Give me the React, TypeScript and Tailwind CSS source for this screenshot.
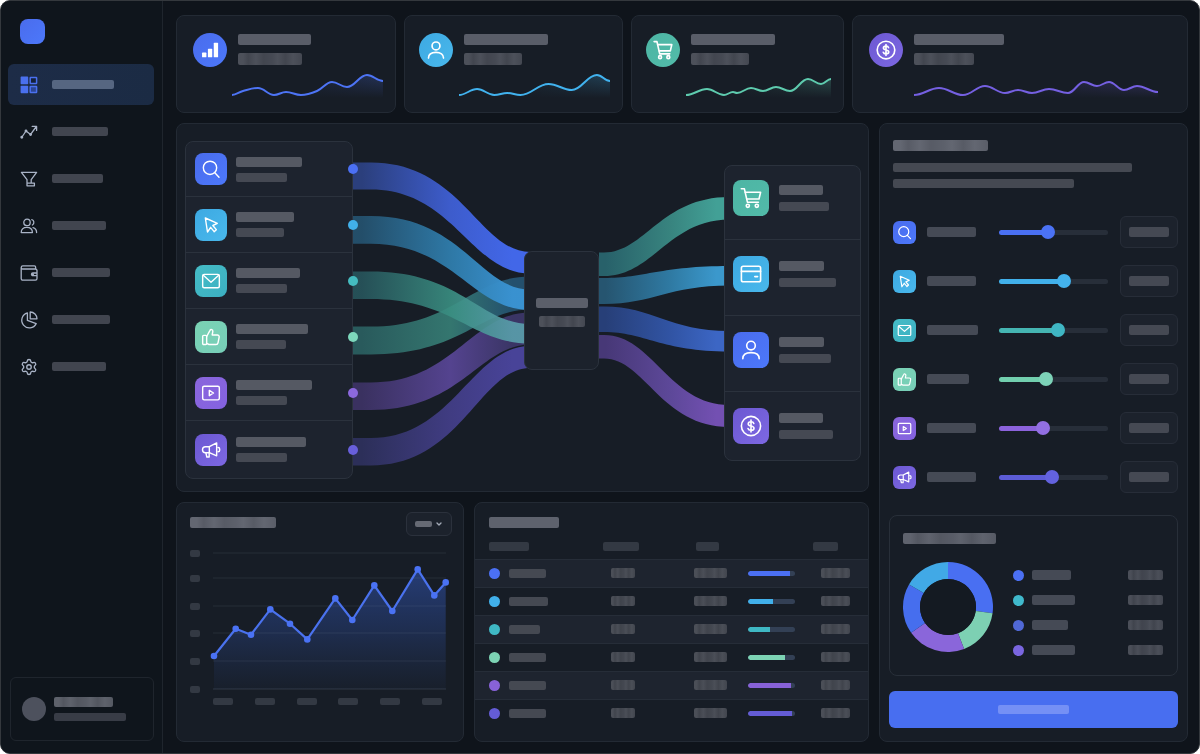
import React, { useState } from "react";
import { ChevronDown, Settings } from "lucide-react";

type IconName =
  | "search" | "pointer" | "mail" | "like" | "video" | "megaphone"
  | "cart" | "card" | "user" | "dollar" | "bars";

const glyphs: Record<IconName, React.ReactNode> = {
  search: (
    <>
      <circle cx="10.8" cy="10.6" r="8" />
      <path d="M16.6 16.6 21.6 21.8" />
    </>
  ),
  pointer: <path d="M5.2 3.6 19.6 10 14.2 12.6 18.4 17.6 15.8 20 11.6 14.8 7.8 20.4Z" />,
  mail: (
    <>
      <rect x="2" y="4" width="20" height="16" rx="1.8" />
      <path d="M2.8 5.2 12 13.4 21.2 5.2" />
    </>
  ),
  like: (
    <>
      <rect x="2" y="10" width="4.8" height="11" rx="1.2" />
      <path d="M6.8 11.4 10.8 4c.8-1.6 3.6-1 3.4 1.2L13.4 9.6h6.2a2.2 2.2 0 0 1 2.2 2.6l-1.4 6.8a2.4 2.4 0 0 1-2.4 2H9.6l-2.8-1.4" />
    </>
  ),
  video: (
    <>
      <rect x="2" y="3.8" width="20" height="16.4" rx="1.8" />
      <path d="M10 8.8 15 12 10 15.2Z" />
    </>
  ),
  megaphone: (
    <>
      <path d="M10 8H5.4a3.6 3.6 0 0 0 0 7.2H10l8.8 3.8V3.4L10 8v7.2" />
      <path d="M5.8 15.2 7 20.4h2.8v-5.2M20.4 9h.2a1.8 1.8 0 0 1 1.8 1.8v1.4a1.8 1.8 0 0 1-1.8 1.8h-.2" />
    </>
  ),
  cart: (
    <>
      <path d="M2.3 2.8H5.4L8.4 16.2H19.4" />
      <path d="M6.2 6.2H21.6L20 13H7.8" />
      <circle cx="8.8" cy="19.8" r="1.6" />
      <circle cx="17.8" cy="19.8" r="1.6" />
    </>
  ),
  card: (
    <>
      <rect x="2.4" y="4.2" width="19.2" height="15.6" rx="1.8" />
      <path d="M2.4 9.4H21.6M15.8 14.6h2.8" />
    </>
  ),
  user: (
    <>
      <circle cx="12" cy="7.6" r="4.3" />
      <path d="M3.8 20.8C3.8 16.8 7 14.6 12 14.6s8.2 2.2 8.2 6.2" />
    </>
  ),
  dollar: (
    <>
      <circle cx="12" cy="12" r="9.6" />
      <path d="M14.8 9.4c-.3-1-1.3-1.6-2.8-1.6-1.6 0-2.8.8-2.8 2.1 0 3 5.8 1.3 5.8 4.3 0 1.3-1.3 2.1-3 2.1s-2.7-.7-3-1.8M12 6v12" />
    </>
  ),
  bars: (
    <g fill="currentColor" stroke="none">
      <rect x="1.4" y="15.4" width="5.8" height="6.4" rx="0.8" />
      <rect x="9.2" y="10.4" width="5.8" height="11.4" rx="0.8" />
      <rect x="17" y="2.4" width="5.8" height="19.4" rx="0.8" />
    </g>
  ),
};

function Icon({ name, className, weight = 1.8 }: { name: IconName; className: string; weight?: number }) {
  return (
    <svg viewBox="0 0 24 24" className={className} fill="none" stroke="currentColor" strokeWidth={weight} strokeLinecap="round" strokeLinejoin="round" aria-hidden="true">
      {glyphs[name]}
    </svg>
  );
}

/** Placeholder for a line of text; size and colour come from the class. */
function Bar({ className }: { className: string }) {
  return <span className={`block rounded-xs ${className}`} />;
}

const mottle =
  "bg-[linear-gradient(90deg,#ffffff08_0_8%,#00000012_16%,#ffffff08_28%,#00000012_40%,#00000004_54%,#ffffff08_62%,#00000012_74%,#ffffff08_86%,#0000000c_100%)]";

const chartTint = {
  blue: "bg-linear-to-br from-[#4a6cec] to-[#4c78fb]",
  sky: "bg-linear-to-br from-[#3da9e2] to-[#49b8ec]",
  teal: "bg-linear-to-br from-[#45bcc6] to-[#3cb0c2]",
  mint: "bg-linear-to-br from-[#7ad2b4] to-[#77ceb8]",
  purple: "bg-linear-to-br from-[#8a66dc] to-[#8462e0]",
  violet: "bg-linear-to-br from-[#6c58d2] to-[#7d68e2]",
  green: "bg-linear-to-br from-[#4db5a4] to-[#52bba9]",
};

/* ---------- Sidebar ---------- */

function GridIcon() {
  return (
    <svg viewBox="0 0 18 18" className="size-[18px]" aria-hidden="true">
      <rect x="0.6" y="0.6" width="7.6" height="7.6" rx="0.8" fill="#4a70ee" />
      <rect x="0.6" y="9.8" width="7.6" height="7.4" rx="0.8" fill="#4a70ee" />
      <rect x="10.2" y="1.4" width="6.4" height="6" rx="0.5" fill="#15213a" stroke="#4a70ee" strokeWidth="1.5" />
      <rect x="10.2" y="10.6" width="6.4" height="6" rx="0.5" fill="#2c4694" stroke="#4a70ee" strokeWidth="1.5" />
    </svg>
  );
}

function NavGlyph({ children }: { children: React.ReactNode }) {
  return (
    <svg viewBox="0 0 18 18" className="size-[18px]" fill="none" stroke="currentColor" strokeWidth="1.3" strokeLinecap="round" strokeLinejoin="round" aria-hidden="true">
      {children}
    </svg>
  );
}

function TrendIcon() {
  return (
    <NavGlyph>
      <path d="M2 14 6 8l4.600 3.400L16 4M12.200 3.400h4.400v4" />
      <circle cx="1.800" cy="14.200" r="0.800" fill="currentColor" />
      <circle cx="6" cy="8" r="0.800" fill="currentColor" />
      <circle cx="10.600" cy="11.600" r="0.800" fill="currentColor" />
    </NavGlyph>
  );
}

function FunnelIcon() {
  return (
    <NavGlyph>
      <path d="M1.400 2.400h15.200L11.200 9.600v3.600h3.200v2.600H7V9.600ZM7 13.200h4.200" />
    </NavGlyph>
  );
}

function UsersIcon() {
  return (
    <NavGlyph>
      <circle cx="7" cy="5.400" r="3.200" />
      <path d="M1.200 15.600c0-3.600 2.200-5.200 5.600-5.200s5.600 1.600 5.600 5.200ZM11.800 2.600c2.200.4 3 3.800.6 5.400M13 10.600c2.200.6 3.600 2 3.600 5" />
    </NavGlyph>
  );
}

function WalletIcon() {
  return (
    <NavGlyph>
      <path d="M1.200 3.600v11a1.600 1.600 0 0 0 1.600 1.600h12.600a1.600 1.600 0 0 0 1.600-1.600V6.600a1.600 1.600 0 0 0-1.600-1.600H2.400C.8 5 .8 1.800 2.800 1.800h11.600a1.200 1.200 0 0 1 1.200 1.200V5M17 9h-4.200a1.300 1.300 0 0 0 0 2.600H17" />
      <circle cx="12.900" cy="10.300" r="0.500" fill="currentColor" />
    </NavGlyph>
  );
}

function PieIcon() {
  return (
    <NavGlyph>
      <path d="M7.400 1.900a7.600 7.600 0 1 0 8.800 10.700L7.400 9.400Z" />
      <path d="M10.200 1v6.800H17A6.800 6.800 0 0 0 10.200 1Z" />
    </NavGlyph>
  );
}

const navItems = [
  { id: "Overview", icon: <GridIcon />, bar: "w-[62px]" },
  { id: "Trends", icon: <TrendIcon />, bar: "w-14" },
  { id: "Funnels", icon: <FunnelIcon />, bar: "w-[51px]" },
  { id: "Audience", icon: <UsersIcon />, bar: "w-[54px]" },
  { id: "Revenue", icon: <WalletIcon />, bar: "w-[58px]" },
  { id: "Reports", icon: <PieIcon />, bar: "w-[58px]" },
  { id: "Settings", icon: <Settings size={18} strokeWidth={1.8} />, bar: "w-[54px]" },
];

function Sidebar() {
  return (
    <aside className="flex w-[162px] shrink-0 flex-col border-r border-[#1f252d] bg-[#0f151c] pr-2 pb-3 pl-[7px]">
      <div className={`mt-[18px] ml-3 size-[25px] rounded-lg ${chartTint.blue}`} />
      <nav className="mt-5 flex flex-col gap-1.5">
        {navItems.map((item, i) => (
          <a
            key={item.id}
            href={`#${item.id.toLowerCase()}`}
            aria-label={item.id}
            aria-current={i === 0 ? "page" : undefined}
            className={`flex h-[41px] items-center gap-3.5 rounded-md pl-3 text-[#a9b3c6] ${i === 0 ? "bg-linear-to-r from-[#1d2c47] to-[#1b2b44]" : ""}`}
          >
            {item.icon}
            <Bar className={`h-[9px] ${item.bar} ${i === 0 ? "bg-[#566681]" : "bg-[#41454f]"}`} />
          </a>
        ))}
      </nav>
      <div className="mt-auto ml-0.5 flex h-16 items-center gap-2 rounded-md border border-[#1f252d] pl-[11px]">
        <span className="size-6 rounded-full bg-[#4d515d]" />
        <div className="flex flex-col gap-1.5">
          <Bar className={`h-[10px] w-[59px] bg-[#595d67] ${mottle}`} />
          <Bar className="h-2 w-[72px] bg-[#383c46]" />
        </div>
      </div>
    </aside>
  );
}

/* ---------- Stat cards ---------- */

type Point = [number, number];

function smoothPath(points: Point[]) {
  const slope = (i: number) => {
    if (i === 0 || i === points.length - 1) return 0;
    const [before, , after] = [points[i - 1], points[i], points[i + 1]];
    const turning = (points[i][1] - before[1]) * (after[1] - points[i][1]) <= 0;
    return turning ? 0 : (after[1] - before[1]) / (after[0] - before[0]);
  };
  let d = `M${points[0][0]} ${points[0][1]}`;
  for (let i = 0; i < points.length - 1; i++) {
    const [x1, y1] = points[i];
    const [x2, y2] = points[i + 1];
    const reach = (x2 - x1) * 0.4;
    d += `C${x1 + reach} ${y1 + slope(i) * reach} ${x2 - reach} ${y2 - slope(i + 1) * reach} ${x2} ${y2}`;
  }
  return d;
}

interface Stat {
  icon: IconName;
  tint: string;
  color: string;
  pad: string;
  indent: string;
  title: string;
  value: string;
  glyph: string;
  points: Point[];
}

const stats: Stat[] = [
  {
    icon: "bars", tint: chartTint.blue, color: "#4d74f5", pad: "pr-3 pl-4", indent: "ml-[39px]", title: "w-[73px]", value: "w-16", glyph: "size-[18px]",
    points: [[0, 25], [11, 21], [26, 18], [42, 25], [54, 22], [69, 25], [85, 21], [100, 12], [115, 17], [135, 5], [151, 11]],
  },
  {
    icon: "user", tint: chartTint.sky, color: "#41b2ee", pad: "pr-3 pl-3.5", indent: "ml-10", title: "w-[84px]", value: "w-[58px]", glyph: "size-[22px]",
    points: [[0, 25], [18, 19], [35, 25], [48, 23], [61, 25], [89, 14], [112, 20], [137, 5], [150, 11]],
  },
  {
    icon: "cart", tint: chartTint.green, color: "#5ecbae", pad: "pr-3 pl-3.5", indent: "ml-10", title: "w-[84px]", value: "w-[58px]", glyph: "size-[22px]",
    points: [[0, 25], [21, 19], [38, 25], [47, 22], [51, 23], [65, 18], [77, 21], [90, 17], [104, 21], [122, 9], [135, 14], [145, 9]],
  },
  {
    icon: "dollar", tint: chartTint.violet, color: "#7560e2", pad: "pr-[29px] pl-4", indent: "ml-[45px]", title: "w-[90px]", value: "w-[60px]", glyph: "size-[22px]",
    points: [[0, 25], [25, 18], [49, 25], [71, 16], [91, 23], [104, 20], [118, 23], [135, 19], [154, 23], [170, 12], [183, 16], [195, 12], [210, 20], [223, 16], [244, 22]],
  },
];

function StatCard({ stat }: { stat: Stat }) {
  const width = stat.points[stat.points.length - 1][0];
  const line = smoothPath(stat.points);
  const id = `spark-${stat.icon}`;
  return (
    <section className={`rounded-lg border border-[#232a34] bg-[#171d26] pt-[17px] pb-3.5 ${stat.pad}`}>
      <div className="flex gap-[11px]">
        <span className={`flex size-[34px] items-center justify-center rounded-full text-white ${stat.tint}`}>
          <Icon name={stat.icon} className={stat.glyph} />
        </span>
        <div className="flex flex-col gap-2 pt-px">
          <Bar className={`h-[11px] bg-[#595d68] ${stat.title}`} />
          <Bar className={`h-3 bg-[#474b55] ${mottle} ${stat.value}`} />
        </div>
      </div>
      <div className={`mt-[3px] ${stat.indent}`}>
        <svg viewBox={`0 0 ${width} 28`} preserveAspectRatio="none" className="h-7 w-full overflow-visible" aria-hidden="true">
          <defs>
            <linearGradient id={id} x1="0" y1="0" x2="1" y2="0">
              <stop offset="0.3" stopColor={stat.color} stopOpacity="0" />
              <stop offset="1" stopColor={stat.color} stopOpacity="0.24" />
            </linearGradient>
            <linearGradient id={`${id}-fade`} x1="0" y1="0" x2="0" y2="1">
              <stop offset="0" stopColor="#171d26" stopOpacity="0" />
              <stop offset="1" stopColor="#171d26" />
            </linearGradient>
          </defs>
          <path d={`${line}V28H0Z`} fill={`url(#${id})`} />
          <path d={`${line}V28H0Z`} fill={`url(#${id}-fade)`} />
          <path d={line} fill="none" stroke={stat.color} strokeWidth="2" />
        </svg>
      </div>
    </section>
  );
}

/* ---------- Flow diagram ---------- */

const sources: { icon: IconName; tint: string; dot: string; a: string; b: string }[] = [
  { icon: "search", tint: chartTint.blue, dot: "bg-[#4b70f4]", a: "w-[66px]", b: "w-[51px]" },
  { icon: "pointer", tint: chartTint.sky, dot: "bg-[#41b0ea]", a: "w-[58px]", b: "w-12" },
  { icon: "mail", tint: chartTint.teal, dot: "bg-[#45bcc0]", a: "w-16", b: "w-[51px]" },
  { icon: "like", tint: chartTint.mint, dot: "bg-[#7dd8bc]", a: "w-[72px]", b: "w-[50px]" },
  { icon: "video", tint: chartTint.purple, dot: "bg-[#8c68de]", a: "w-[76px]", b: "w-[51px]" },
  { icon: "megaphone", tint: chartTint.violet, dot: "bg-[#685fdc]", a: "w-[70px]", b: "w-[51px]" },
];

const targets: { icon: IconName; tint: string; a: string; b: string }[] = [
  { icon: "cart", tint: chartTint.green, a: "w-11", b: "w-[50px]" },
  { icon: "card", tint: chartTint.sky, a: "w-[45px]", b: "w-[57px]" },
  { icon: "user", tint: chartTint.blue, a: "w-[45px]", b: "w-[52px]" },
  { icon: "dollar", tint: chartTint.violet, a: "w-11", b: "w-[54px]" },
];

interface Ribbon {
  from: [number, number];
  to: [number, number];
  colors: [string, string, string];
  opacity?: number;
}

const inbound: Ribbon[] = [
  { from: [185.5, 213.5], to: [135.5, 168.5], colors: ["#295a5c", "#34766f", "#24506d"] },
  { from: [241.5, 269], to: [171.5, 203.5], colors: ["#3a3160", "#54438f", "#3a3565"] },
  { from: [297, 324.5], to: [205, 227], colors: ["#2c2f59", "#403c82", "#484398"] },
  { from: [75, 102.7], to: [148.5, 169], colors: ["#24506c", "#2f7cab", "#3a94d4"], opacity: 0.96 },
  { from: [21.5, 48.5], to: [111, 132.7], colors: ["#2b3f7c", "#3d5ccc", "#4267e8"] },
  { from: [130.5, 158], to: [183, 202.5], colors: ["#27555c", "#3a8f82", "#5a9fac"], opacity: 0.9 },
];

const outbound: Ribbon[] = [
  { from: [111.5, 135], to: [56, 78.5], colors: ["#28616a", "#38847f", "#42a096"] },
  { from: [137, 163], to: [125, 144.5], colors: ["#265570", "#2f7aa3", "#3b98cc"] },
  { from: [165.5, 191], to: [190, 210.5], colors: ["#273f78", "#3154a4", "#3c66c4"] },
  { from: [194, 217.5], to: [264, 286], colors: ["#473877", "#5d4899", "#7350b2"] },
];

/** Each ribbon runs flat for a stretch, then bends towards its end through the two bend positions. */
function Ribbons({ id, ribbons, width, flat, bend }: { id: string; ribbons: Ribbon[]; width: number; flat: number; bend: [number, number] }) {
  const end = width + 6;
  return (
    <svg viewBox={`0 0 ${width} 338`} preserveAspectRatio="none" className="h-[338px] w-full overflow-visible" aria-hidden="true">
      {ribbons.map((r, i) => {
        const lean = r.to[0] > r.from[0] ? 4 : -4;
        return (
          <g key={i}>
            <linearGradient id={`${id}-${i}`}>
              <stop offset="0.05" stopColor={r.colors[0]} />
              <stop offset="0.55" stopColor={r.colors[1]} />
              <stop offset="0.9" stopColor={r.colors[2]} />
            </linearGradient>
            <path
              fill={`url(#${id}-${i})`}
              fillOpacity={r.opacity ?? 1}
              d={`M0 ${r.from[0]}H${flat}C${bend[0] + lean} ${r.from[0]} ${bend[1] + lean} ${r.to[0]} ${end} ${r.to[0]}V${r.to[1]}C${bend[1] - lean} ${r.to[1]} ${bend[0] - lean} ${r.from[1]} ${flat} ${r.from[1]}H0Z`}
            />
          </g>
        );
      })}
    </svg>
  );
}

function FlowPanel() {
  return (
    <section className="flex items-center rounded-lg border border-[#232a34] bg-[#171d26] pt-[17px] pr-[7px] pb-3 pl-2">
      <ul className="relative z-10 w-[168px] shrink-0 rounded-lg border border-[#2b323d] bg-[#1d232e]">
        {sources.map((s) => (
          <li key={s.icon} className="relative flex h-14 items-center gap-[9px] border-b border-[#2b323d] pl-[9px] first:h-[55px] last:h-[57px] last:border-b-0">
            <span className={`flex size-8 items-center justify-center rounded-lg text-white ${s.tint}`}>
              <Icon name={s.icon} className="size-5" weight={1.7} />
            </span>
            <div className="flex flex-col gap-1.5">
              <Bar className={`h-[10px] bg-[#555963] ${s.a}`} />
              <Bar className={`h-[9px] bg-[#454953] ${s.b}`} />
            </div>
            <span className={`absolute top-1/2 -right-1.5 size-[10px] -translate-y-1/2 rounded-full ${s.dot}`} />
          </li>
        ))}
      </ul>
      <div className="min-w-0 flex-[172]">
        <Ribbons id="in" ribbons={inbound} width={172} flat={18} bend={[105, 123]} />
      </div>
      <div className="relative z-10 flex h-[119px] w-[75px] shrink-0 flex-col items-center justify-center gap-2 rounded-lg border border-[#2b323d] bg-[#1c222c] pt-1">
        <Bar className="h-[10px] w-[52px] bg-[#5b5f6a]" />
        <Bar className={`h-[11px] w-[46px] bg-[#474b55] ${mottle}`} />
      </div>
      <div className="min-w-0 flex-[125]">
        <Ribbons id="out" ribbons={outbound} width={125} flat={5} bend={[50, 66]} />
      </div>
      <ul className="relative z-10 mt-1.5 w-[137px] shrink-0 rounded-lg border border-[#2b323d] bg-[#1d232e]">
        {targets.map((t) => (
          <li key={t.icon} className="flex items-center gap-[10px] border-b border-[#2b323d] pt-4 pb-[23px] pl-2 first:pt-3.5 last:border-b-0 last:pb-4">
            <span className={`flex size-9 items-center justify-center rounded-lg text-white ${t.tint}`}>
              <Icon name={t.icon} className="size-6" weight={1.6} />
            </span>
            <div className="flex flex-col gap-[7px]">
              <Bar className={`h-[10px] bg-[#555963] ${t.a}`} />
              <Bar className={`h-[9px] bg-[#454953] ${t.b}`} />
            </div>
          </li>
        ))}
      </ul>
    </section>
  );
}

/* ---------- Line chart ---------- */

const series: Point[] = [
  [1, 103], [22.7, 75.7], [38, 81.7], [57.3, 56.4], [77, 70.7], [94.3, 86.4], [122.3, 45.4],
  [139.3, 67], [161.3, 32.4], [179.3, 58], [204.7, 16.4], [221.3, 42.4], [232.7, 29.4],
];

function ChartPanel() {
  const line = series.map((p) => p.join(",")).join(" ");
  return (
    <section className="flex flex-col rounded-lg border border-[#232a34] bg-[#171d26] px-[13px] pt-[9px]">
      <div className="flex items-start justify-between">
        <Bar className={`mt-[5px] h-[11px] w-[86px] bg-[#5e626d] ${mottle}`} />
        <div className="relative -mr-0.5">
          <select aria-label="Period" className="block h-6 w-[46px] appearance-none rounded-md border border-[#2b313c] bg-[#1c222c]">
            <option value="week" aria-label="Week" />
            <option value="month" aria-label="Month" />
          </select>
          <span className="pointer-events-none absolute inset-0 flex items-center justify-center gap-[3px]">
            <Bar className="h-1.5 w-[17px] bg-[#666a74]" />
            <ChevronDown size={8} strokeWidth={4} color="#a2a9b6" />
          </span>
        </div>
      </div>
      <div className="mt-3.5 flex gap-[13px]">
        <div className="grid w-[10px] grid-rows-[25px_28px_27px_28px_28px_7px]">
          {[0, 1, 2, 3, 4, 5].map((n) => (
            <Bar key={n} className="h-[7px] w-[10px] bg-[#333943]" />
          ))}
        </div>
        <div className="min-w-0 flex-1 pt-[3px] pr-1">
          <svg viewBox="0 0 233 136" className="w-full overflow-visible" aria-hidden="true">
            <defs>
              <linearGradient id="area" x1="0" y1="0" x2="0" y2="1">
                <stop offset="0" stopColor="#3358bc" stopOpacity="0.54" />
                <stop offset="0.5" stopColor="#2c4c9c" stopOpacity="0.36" />
                <stop offset="1" stopColor="#2b4684" stopOpacity="0.06" />
              </linearGradient>
            </defs>
            <polygon points={`1,136 ${line} 232.7,136`} fill="url(#area)" />
            {[0, 25, 53, 80, 108, 136].map((y) => (
              <path key={y} d={`M0 ${y}H233`} stroke="#8d9bb5" strokeOpacity={y === 136 ? 0.22 : 0.13} />
            ))}
            <polyline points={line} fill="none" stroke="#4a72ee" strokeWidth="2.2" strokeLinejoin="round" />
            {series.map(([x, y]) => (
              <circle key={x} cx={x} cy={y} r="3.3" fill="#4a72f4" />
            ))}
          </svg>
          <div className="mt-[9px] flex justify-between pr-1">
            {[0, 1, 2, 3, 4, 5].map((n) => (
              <Bar key={n} className="h-[7px] w-5 bg-[#333943]" />
            ))}
          </div>
        </div>
      </div>
    </section>
  );
}

/* ---------- Table ---------- */

const rows = [
  { dot: "bg-[#4b70f4]", label: "w-[37px]", share: 89 },
  { dot: "bg-[#41b0ea]", label: "w-[39px]", share: 52 },
  { dot: "bg-[#3fb8c4]", label: "w-[31px]", share: 47 },
  { dot: "bg-[#7dd3b4]", label: "w-[37px]", share: 78 },
  { dot: "bg-[#8862d8]", label: "w-[37px]", share: 92 },
  { dot: "bg-[#645cd6]", label: "w-[37px]", share: 93 },
];

function TablePanel() {
  return (
    <section className="rounded-lg border border-[#232a34] bg-[#171d26] pt-3.5 pb-3.5">
      <Bar className="ml-3.5 h-[11px] w-[70px] bg-[#5e626d]" />
      <table className="mt-1.5 w-full table-fixed border-collapse" aria-label="Channels">
        <thead>
          <tr className="h-[25px]">
            <th scope="col" aria-label="Channel" className="w-[32.5%] p-0 pl-3.5"><Bar className="h-[9px] w-10 bg-[#333943]" /></th>
            <th scope="col" aria-label="Visits" className="w-[22.2%] p-0"><Bar className="h-[9px] w-9 bg-[#333943]" /></th>
            <th scope="col" aria-label="Rate" className="w-[14.8%] p-0 pl-1.5"><Bar className="h-[9px] w-[23px] bg-[#333943]" /></th>
            <th scope="col" aria-label="Share" className="w-[16.5%] p-0" />
            <th scope="col" aria-label="Total" className="p-0"><Bar className="h-[9px] w-[25px] bg-[#333943]" /></th>
          </tr>
        </thead>
        <tbody>
          {rows.map((r) => (
            <tr key={r.dot} className="h-7 border-t border-[#262d38] odd:bg-[#1e242f]">
              <td className="p-0 pl-3.5">
                <span className="flex items-center gap-[9px]">
                  <span className={`size-[11px] rounded-full ${r.dot}`} />
                  <Bar className={`h-[9px] bg-[#454952] ${r.label}`} />
                </span>
              </td>
              <td className="p-0 pl-2"><Bar className={`h-[10px] w-6 bg-[#454952] ${mottle}`} /></td>
              <td className="p-0 pl-1"><Bar className={`h-[10px] w-[33px] bg-[#454952] ${mottle}`} /></td>
              <td className="p-0">
                <span className="block h-[5px] w-[47px] overflow-hidden rounded-full bg-[#334055]">
                  <span className={`block h-full rounded-l-full ${r.dot}`} style={{ width: `${r.share}%` }} />
                </span>
              </td>
              <td className="p-0 pl-2"><Bar className={`h-[10px] w-[29px] bg-[#454952] ${mottle}`} /></td>
            </tr>
          ))}
        </tbody>
      </table>
    </section>
  );
}

/* ---------- Right panel ---------- */

const controls: { icon: IconName; tint: string; label: string; value: number; color: string; thumb: string }[] = [
  { icon: "search", tint: chartTint.blue, label: "w-[49px]", value: 44, color: "#4a70f2", thumb: "[&::-webkit-slider-thumb]:bg-[#4b72f4]" },
  { icon: "pointer", tint: chartTint.sky, label: "w-[49px]", value: 61, color: "#41b0ea", thumb: "[&::-webkit-slider-thumb]:bg-[#43b2ec]" },
  { icon: "mail", tint: chartTint.teal, label: "w-[51px]", value: 55, color: "#45b5b2", thumb: "[&::-webkit-slider-thumb]:bg-[#3fb6c3]" },
  { icon: "like", tint: chartTint.mint, label: "w-[42px]", value: 42, color: "#72cfae", thumb: "[&::-webkit-slider-thumb]:bg-[#7dd3b8]" },
  { icon: "video", tint: chartTint.purple, label: "w-[49px]", value: 39, color: "#8c63dc", thumb: "[&::-webkit-slider-thumb]:bg-[#926fe2]" },
  { icon: "megaphone", tint: chartTint.violet, label: "w-[49px]", value: 48, color: "#5c5cd6", thumb: "[&::-webkit-slider-thumb]:bg-[#6362de]" },
];

function ControlRow({ control }: { control: (typeof controls)[number] }) {
  const [value, setValue] = useState(control.value);
  const id = `weight-${control.icon}`;
  return (
    <div className="grid h-8 grid-cols-[24px_62px_1fr_58px] items-center">
      <span className={`flex size-[23px] items-center justify-center rounded-md text-white ${control.tint}`}>
        <Icon name={control.icon} className="size-[15px]" weight={1.9} />
      </span>
      <label htmlFor={id} aria-label={control.icon} className="pl-[10px]">
        <Bar className={`h-[10px] bg-[#454a55] ${control.label}`} />
      </label>
      <div className="flex items-center pr-3 pl-5">
        <input
          id={id}
          type="range"
          value={value}
          onChange={(e) => setValue(Number(e.target.value))}
          style={{ background: `linear-gradient(90deg, ${control.color} ${value}%, #272e39 ${value}%)` }}
          className={`h-[5px] w-full min-w-0 appearance-none rounded-full [&::-webkit-slider-thumb]:size-3.5 [&::-webkit-slider-thumb]:appearance-none [&::-webkit-slider-thumb]:rounded-full ${control.thumb}`}
        />
      </div>
      <output htmlFor={id} className="flex h-8 items-center justify-center rounded-md border border-[#272d38] bg-[#1c222c]">
        <Bar className="h-[10px] w-10 bg-[#454953]" />
      </output>
    </div>
  );
}

const slices = [
  { from: 0, to: 98, color: "#496ff2" },
  { from: 98, to: 159, color: "#7dd0b3" },
  { from: 159, to: 235, color: "#8a66da" },
  { from: 235, to: 300, color: "#466eee" },
  { from: 300, to: 360, color: "#41a9e6" },
];

function slicePath(from: number, to: number) {
  const at = (deg: number, r: number) => {
    const a = ((deg - 90) * Math.PI) / 180;
    return `${(45 + r * Math.cos(a)).toFixed(2)} ${(45 + r * Math.sin(a)).toFixed(2)}`;
  };
  return `M${at(from, 45)}A45 45 0 0 1 ${at(to, 45)}L${at(to, 28)}A28 28 0 0 0 ${at(from, 28)}Z`;
}

const legend = [
  { dot: "bg-[#4b70f4]", label: "w-[39px]" },
  { dot: "bg-[#40b9cc]", label: "w-[43px]" },
  { dot: "bg-[#5068d6]", label: "w-9" },
  { dot: "bg-[#7a66e0]", label: "w-[43px]" },
];

function SidePanel() {
  return (
    <section className="rounded-lg border border-[#232a34] bg-[#171d26] px-[9px] pt-4 pb-[13px]">
      <div className="pl-1">
        <Bar className={`h-[11px] w-[95px] bg-[#5e626d] ${mottle}`} />
        <Bar className="mt-3 h-[9px] w-[239px] bg-[#454952]" />
        <Bar className="mt-[7px] h-[9px] w-[181px] bg-[#454952]" />
      </div>
      <div className="mt-7 flex flex-col gap-[17px] pl-1">
        {controls.map((c) => (
          <ControlRow key={c.icon} control={c} />
        ))}
      </div>
      <div className="mt-[22px] h-[161px] rounded-lg border border-[#282f39] pt-[17px] pr-3.5 pl-[13px]">
        <Bar className={`h-[11px] w-[93px] bg-[#5a5e69] ${mottle}`} />
        <div className="mt-[18px] flex gap-5">
          <svg viewBox="0 0 90 90" className="size-[90px] shrink-0" role="img" aria-label="Distribution">
            {slices.map((s) => (
              <path key={s.from} d={slicePath(s.from, s.to)} fill={s.color} />
            ))}
            <circle cx="45" cy="45" r="28" fill="#141a22" />
          </svg>
          <ul className="mt-2 flex flex-1 flex-col gap-[15px]">
            {legend.map((l) => (
              <li key={l.dot} className="flex h-[10px] items-center">
                <span className={`size-[11px] rounded-full ${l.dot}`} />
                <Bar className={`ml-2 h-[10px] bg-[#454a55] ${l.label}`} />
                <Bar className={`ml-auto h-[10px] w-[35px] bg-[#454953] ${mottle}`} />
              </li>
            ))}
          </ul>
        </div>
      </div>
      <button type="button" aria-label="Apply" className="mt-[15px] flex h-[37px] w-full items-center justify-center rounded-md bg-[#486ef0]">
        <Bar className="h-[9px] w-[71px] bg-[#7590f5]" />
      </button>
    </section>
  );
}

export default function App() {
  return (
    <div className="flex min-h-screen bg-white font-['Inter',sans-serif]">
      <div className="flex flex-1 overflow-hidden rounded-[10px] border border-[#34383d] bg-[#0f141b]">
        <Sidebar />
        <main className="flex min-w-0 flex-1 flex-col gap-[10px] pt-3.5 pr-[11px] pb-[11px] pl-[13px]">
          <div className="grid grid-cols-[220fr_219fr_213fr_336fr] gap-2">
            {stats.map((s) => (
              <StatCard key={s.icon} stat={s} />
            ))}
          </div>
          <div className="grid flex-1 grid-cols-[1fr_309px] gap-[10px]">
            <div className="flex min-w-0 flex-col gap-[10px]">
              <FlowPanel />
              <div className="grid flex-1 grid-cols-[288fr_395fr] gap-[10px]">
                <ChartPanel />
                <TablePanel />
              </div>
            </div>
            <SidePanel />
          </div>
        </main>
      </div>
    </div>
  );
}
